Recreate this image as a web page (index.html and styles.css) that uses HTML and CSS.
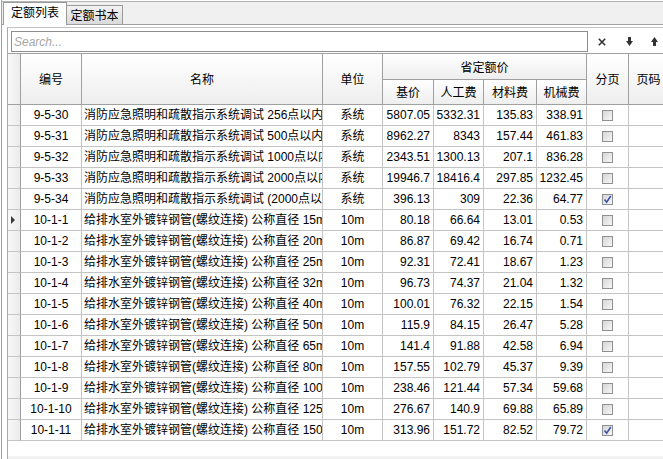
FILE: index.html
```html
<!DOCTYPE html>
<html lang="zh-CN">
<head>
<meta charset="utf-8">
<title>定额列表</title>
<link rel="stylesheet" href="styles.css">
</head>
<body>
<div class="app">
  <div class="tabstrip">
    <div class="tab active">定额列表</div>
    <div class="tab">定额书本</div>
  </div>
  <div class="panel">
    <div class="frame">
      <div class="searchrow">
        <input class="search" type="text" placeholder="Search...">
        <button class="btn btn-clear" type="button" aria-label="清除">
          <svg width="8" height="8" viewBox="0 0 8 8"><path d="M0.8 0.8L7.2 7.2M7.2 0.8L0.8 7.2" stroke="#333" stroke-width="1.6" fill="none"/></svg>
        </button>
        <button class="btn btn-down" type="button" aria-label="下一个">
          <svg width="7" height="9" viewBox="0 0 7 9"><path d="M2 0H5V4H7L3.5 9L0 4H2Z" fill="#333"/></svg>
        </button>
        <button class="btn btn-up" type="button" aria-label="上一个">
          <svg width="7" height="9" viewBox="0 0 7 9"><path d="M3.5 0L7 5H5V9H2V5H0Z" fill="#333"/></svg>
        </button>
      </div>
      <div class="grid">
        <div class="h corner"></div>
        <div class="h span2">编号</div>
        <div class="h span2">名称</div>
        <div class="h span2">单位</div>
        <div class="h group">省定额价</div>
        <div class="h span2 c9">分页</div>
        <div class="h span2 c10">页码</div>
        <div class="h sub">基价</div>
        <div class="h sub">人工费</div>
        <div class="h sub">材料费</div>
        <div class="h sub">机械费</div>

        <div class="rh"></div><div class="c code">9-5-30</div><div class="c name"><span class="clip">消防应急照明和疏散指示系统调试 256点以内</span></div><div class="c unit">系统</div><div class="c num">5807.05</div><div class="c num">5332.31</div><div class="c num">135.83</div><div class="c num">338.91</div><div class="c chk"><span class="box"></span></div><div class="c"></div>
        <div class="rh"></div><div class="c code">9-5-31</div><div class="c name"><span class="clip">消防应急照明和疏散指示系统调试 500点以内</span></div><div class="c unit">系统</div><div class="c num">8962.27</div><div class="c num">8343</div><div class="c num">157.44</div><div class="c num">461.83</div><div class="c chk"><span class="box"></span></div><div class="c"></div>
        <div class="rh"></div><div class="c code">9-5-32</div><div class="c name"><span class="clip">消防应急照明和疏散指示系统调试 1000点以内</span></div><div class="c unit">系统</div><div class="c num">2343.51</div><div class="c num">1300.13</div><div class="c num">207.1</div><div class="c num">836.28</div><div class="c chk"><span class="box"></span></div><div class="c"></div>
        <div class="rh"></div><div class="c code">9-5-33</div><div class="c name"><span class="clip">消防应急照明和疏散指示系统调试 2000点以内</span></div><div class="c unit">系统</div><div class="c num">19946.7</div><div class="c num">18416.4</div><div class="c num">297.85</div><div class="c num">1232.45</div><div class="c chk"><span class="box"></span></div><div class="c"></div>
        <div class="rh"></div><div class="c code">9-5-34</div><div class="c name"><span class="clip">消防应急照明和疏散指示系统调试 (2000点以上)</span></div><div class="c unit">系统</div><div class="c num">396.13</div><div class="c num">309</div><div class="c num">22.36</div><div class="c num">64.77</div><div class="c chk"><span class="box checked"><svg width="9" height="9" viewBox="0 0 9 9"><path d="M1.5 4.6L3.6 7.2L7.8 1" stroke="#3b55a6" stroke-width="1.6" fill="none"/></svg></span></div><div class="c"></div>
        <div class="rh"><span class="ptr"></span></div><div class="c code">10-1-1</div><div class="c name"><span class="clip">给排水室外镀锌钢管(螺纹连接) 公称直径 15mm以内</span></div><div class="c unit">10m</div><div class="c num">80.18</div><div class="c num">66.64</div><div class="c num">13.01</div><div class="c num">0.53</div><div class="c chk"><span class="box"></span></div><div class="c"></div>
        <div class="rh"></div><div class="c code">10-1-2</div><div class="c name"><span class="clip">给排水室外镀锌钢管(螺纹连接) 公称直径 20mm以内</span></div><div class="c unit">10m</div><div class="c num">86.87</div><div class="c num">69.42</div><div class="c num">16.74</div><div class="c num">0.71</div><div class="c chk"><span class="box"></span></div><div class="c"></div>
        <div class="rh"></div><div class="c code">10-1-3</div><div class="c name"><span class="clip">给排水室外镀锌钢管(螺纹连接) 公称直径 25mm以内</span></div><div class="c unit">10m</div><div class="c num">92.31</div><div class="c num">72.41</div><div class="c num">18.67</div><div class="c num">1.23</div><div class="c chk"><span class="box"></span></div><div class="c"></div>
        <div class="rh"></div><div class="c code">10-1-4</div><div class="c name"><span class="clip">给排水室外镀锌钢管(螺纹连接) 公称直径 32mm以内</span></div><div class="c unit">10m</div><div class="c num">96.73</div><div class="c num">74.37</div><div class="c num">21.04</div><div class="c num">1.32</div><div class="c chk"><span class="box"></span></div><div class="c"></div>
        <div class="rh"></div><div class="c code">10-1-5</div><div class="c name"><span class="clip">给排水室外镀锌钢管(螺纹连接) 公称直径 40mm以内</span></div><div class="c unit">10m</div><div class="c num">100.01</div><div class="c num">76.32</div><div class="c num">22.15</div><div class="c num">1.54</div><div class="c chk"><span class="box"></span></div><div class="c"></div>
        <div class="rh"></div><div class="c code">10-1-6</div><div class="c name"><span class="clip">给排水室外镀锌钢管(螺纹连接) 公称直径 50mm以内</span></div><div class="c unit">10m</div><div class="c num">115.9</div><div class="c num">84.15</div><div class="c num">26.47</div><div class="c num">5.28</div><div class="c chk"><span class="box"></span></div><div class="c"></div>
        <div class="rh"></div><div class="c code">10-1-7</div><div class="c name"><span class="clip">给排水室外镀锌钢管(螺纹连接) 公称直径 65mm以内</span></div><div class="c unit">10m</div><div class="c num">141.4</div><div class="c num">91.88</div><div class="c num">42.58</div><div class="c num">6.94</div><div class="c chk"><span class="box"></span></div><div class="c"></div>
        <div class="rh"></div><div class="c code">10-1-8</div><div class="c name"><span class="clip">给排水室外镀锌钢管(螺纹连接) 公称直径 80mm以内</span></div><div class="c unit">10m</div><div class="c num">157.55</div><div class="c num">102.79</div><div class="c num">45.37</div><div class="c num">9.39</div><div class="c chk"><span class="box"></span></div><div class="c"></div>
        <div class="rh"></div><div class="c code">10-1-9</div><div class="c name"><span class="clip">给排水室外镀锌钢管(螺纹连接) 公称直径 100mm以内</span></div><div class="c unit">10m</div><div class="c num">238.46</div><div class="c num">121.44</div><div class="c num">57.34</div><div class="c num">59.68</div><div class="c chk"><span class="box"></span></div><div class="c"></div>
        <div class="rh"></div><div class="c code">10-1-10</div><div class="c name"><span class="clip">给排水室外镀锌钢管(螺纹连接) 公称直径 125mm以内</span></div><div class="c unit">10m</div><div class="c num">276.67</div><div class="c num">140.9</div><div class="c num">69.88</div><div class="c num">65.89</div><div class="c chk"><span class="box"></span></div><div class="c"></div>
        <div class="rh"></div><div class="c code">10-1-11</div><div class="c name"><span class="clip">给排水室外镀锌钢管(螺纹连接) 公称直径 150mm以内</span></div><div class="c unit">10m</div><div class="c num">313.96</div><div class="c num">151.72</div><div class="c num">82.52</div><div class="c num">79.72</div><div class="c chk"><span class="box checked"><svg width="9" height="9" viewBox="0 0 9 9"><path d="M1.5 4.6L3.6 7.2L7.8 1" stroke="#3b55a6" stroke-width="1.6" fill="none"/></svg></span></div><div class="c"></div>
      </div>
      <div class="filler"></div>
      <div class="hscroll"></div>
    </div>
  </div>
</div>
</body>
</html>
```
FILE: styles.css
```css
* { box-sizing: border-box; }
html, body { margin: 0; padding: 0; }
body {
  width: 663px;
  height: 459px;
  overflow: hidden;
  background: #fff;
  color: #000;
  font-family: "Liberation Sans", "Noto Sans CJK SC", sans-serif;
  font-size: 12px;
}
.app {
  height: 459px;
  margin-left: 1px;
  border-left: 1px solid #a0a0a0;
  display: flex;
  flex-direction: column;
  overflow: hidden;
}
.tabstrip {
  flex: none;
  display: flex;
  align-items: flex-end;
  height: 24px;
  margin-top: 1px;
  border-top: 1px solid #b4b4b4;
  border-bottom: 1px solid #a0a0a0;
  background: #f0f0f0;
}
.tab {
  display: flex;
  align-items: center;
  justify-content: center;
  line-height: 14px;
  width: 56px;
  height: 19px;
  border: 1px solid #999;
  border-left: none;
  border-bottom: none;
  background: linear-gradient(#f3f3f3, #dadada);
  padding-top: 1px;
}
.tab.active {
  position: relative;
  z-index: 1;
  width: 64px;
  height: 23px;
  margin-left: 1px;
  margin-bottom: -1px;
  border-left: 1px solid #999;
  background: #fff;
  padding-top: 0;
  padding-bottom: 2px;
}
.panel {
  flex: 1;
  padding: 2px 0 0 5px;
  min-height: 0;
}
.frame {
  height: 100%;
  border-top: 1px solid #c4c4c4;
  border-left: 1px solid #a8a8a8;
  display: flex;
  flex-direction: column;
  overflow: hidden;
}
.searchrow {
  flex: none;
  display: flex;
  align-items: center;
  height: 25px;
  padding: 3px 0 1px 3px;
}
.search {
  flex: none;
  width: 577px;
  height: 21px;
  margin: 0;
  border: 1px solid #8e8e8e;
  padding: 0 0 0 2px;
  font-family: "Liberation Sans", sans-serif;
  font-size: 12px;
  background: #fff;
  outline: none;
}
.search::placeholder {
  color: #a6a6a6;
  font-style: italic;
}
.btn {
  flex: none;
  display: flex;
  align-items: center;
  justify-content: center;
  height: 21px;
  margin: 0;
  padding: 0;
  border: none;
  background: transparent;
}
.btn-clear { width: 28px; }
.btn-down { width: 26px; }
.btn-up { width: 24px; }
.grid {
  flex: none;
  display: grid;
  grid-template-columns: 13px 61px 241px 60px 51px 50px 53px 50px 42px 40px;
  grid-template-rows: 26px 25px repeat(16, 21px);
  width: 661px;
  border-top: 1px solid #a0a0a0;
}
.h {
  display: flex;
  align-items: center;
  justify-content: center;
  border-right: 1px solid #a0a0a0;
  border-bottom: 1px solid #a0a0a0;
  background: linear-gradient(#ffffff, #eeeeee);
  white-space: nowrap;
  overflow: hidden;
  font-family: "Noto Sans CJK SC", sans-serif;
  line-height: 14px;
}
.span2 { grid-row: 1 / 3; }
.corner {
  grid-row: 1 / 3;
  background: linear-gradient(to right, #f8f8f8, #ececec);
}
.group { grid-column: 5 / 9; grid-row: 1; }
.c9 { grid-column: 9; }
.c10 { grid-column: 10; }
.sub { grid-row: 2; }
.rh {
  display: flex;
  align-items: center;
  padding-left: 3px;
  border-right: 1px solid #a0a0a0;
  border-bottom: 1px solid #c4c4c4;
  background: linear-gradient(to right, #f8f8f8, #ebebeb);
}
.ptr {
  width: 0;
  height: 0;
  border-left: 4px solid #3a3a3a;
  border-top: 4px solid transparent;
  border-bottom: 4px solid transparent;
}
.c {
  display: flex;
  align-items: center;
  border-right: 1px solid #c4c4c4;
  border-bottom: 1px solid #c4c4c4;
  white-space: nowrap;
  overflow: hidden;
  line-height: 14px;
  background: #fff;
}
.code, .unit { justify-content: center; }
.name { padding-left: 2px; }
.clip {
  display: block;
  overflow: hidden;
  white-space: nowrap;
  width: 238px;
}
.num { justify-content: flex-end; padding-right: 3px; }
.chk { justify-content: center; }
.box {
  display: flex;
  align-items: center;
  justify-content: center;
  width: 11px;
  height: 11px;
  border: 1px solid #8f9090;
  background: linear-gradient(135deg, #d6d6d6, #f7f7f7);
}
.filler {
  flex: none;
  height: 15px;
}
.hscroll {
  flex: none;
  height: 20px;
  background: #f0f0f0;
  border-top: 1px solid #f4f4f4;
}
```
